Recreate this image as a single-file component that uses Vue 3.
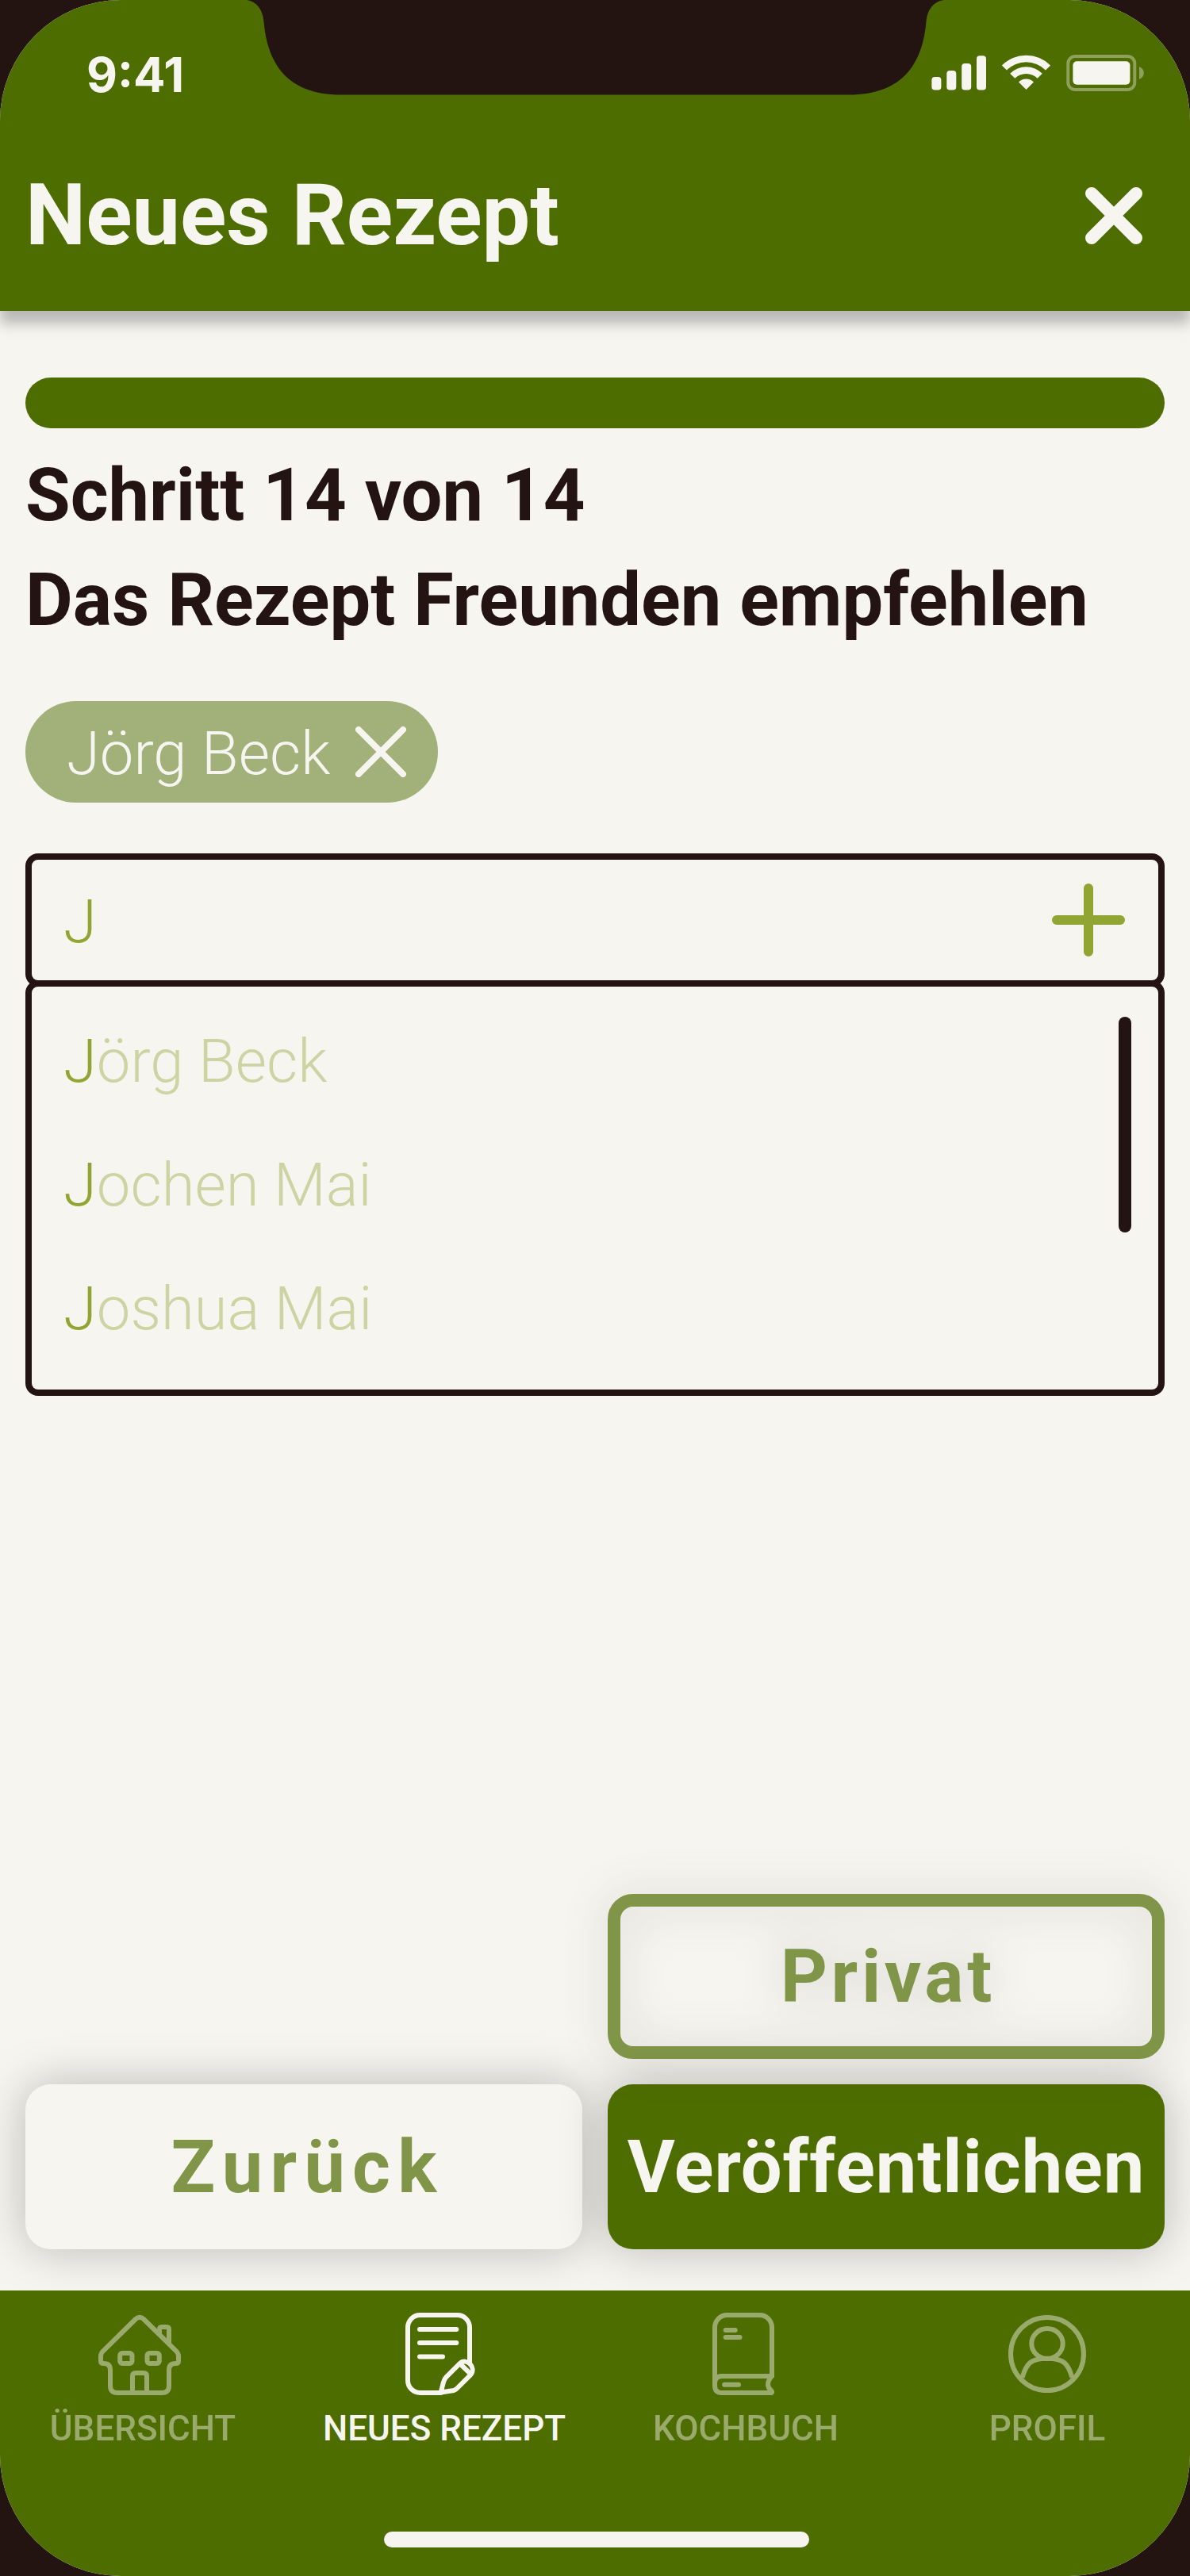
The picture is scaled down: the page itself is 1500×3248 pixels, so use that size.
<script setup>
const query = 'J'
const suggestions = ['Jörg Beck', 'Jochen Mai', 'Joshua Mai']
const tabs = [
  { id: 'home', label: 'ÜBERSICHT' },
  { id: 'new', label: 'NEUES REZEPT', active: true },
  { id: 'book', label: 'KOCHBUCH' },
  { id: 'profile', label: 'PROFIL' },
]
</script>

<template>
  <div class="device">
    <div class="screen">
      <header class="header">
        <div class="status">
          <span class="time">9:41</span>
          <svg class="status-icons" width="270" height="46" viewBox="0 0 270 46">
            <g fill="#f7f5f0">
              <rect x="0.4" y="28" width="12" height="16.5" rx="4" />
              <rect x="19.3" y="20" width="12" height="24.5" rx="4" />
              <rect x="38.2" y="11" width="12" height="33.5" rx="4" />
              <rect x="57" y="1.3" width="12" height="43.2" rx="4" />
              <path d="M88.9 13.4 A43.3 43.3 0 0 1 150.1 13.4 L144 19.5 A34.7 34.7 0 0 0 95 19.5 Z" />
              <path d="M99.2 23.7 A28.7 28.7 0 0 1 139.8 23.7 L133.7 29.8 A20 20 0 0 0 105.3 29.8 Z" />
              <path d="M110 34.5 A13.5 13.5 0 0 1 129 34.5 L119.5 44 Z" />
              <rect x="178.4" y="8.3" width="72" height="29.4" rx="5" />
            </g>
            <g opacity="0.38">
              <rect x="172.3" y="2" width="84" height="42" rx="9" fill="none" stroke="#f7f5f0" stroke-width="4" />
              <path d="M262 15 C265.500 16.500 267.800 19.500 267.800 23 C267.800 26.500 265.500 29.500 262 31 Z" fill="#f7f5f0" />
            </g>
          </svg>
        </div>
        <div class="title-row">
          <h1>Neues Rezept</h1>
          <svg class="close" width="72" height="72" viewBox="0 0 72 72">
            <path d="M8 8 L64 64 M64 8 L8 64" stroke="#f7f5f0" stroke-width="16" stroke-linecap="round" />
          </svg>
        </div>
      </header>

      <main class="main">
        <div class="progress"></div>
        <h2>Schritt 14 von 14<br />Das Rezept Freunden empfehlen</h2>

        <div class="chip">
          <span>Jörg Beck</span>
          <svg width="64" height="64" viewBox="0 0 64 64">
            <path d="M4 4 L60 60 M60 4 L4 60" stroke="#f7f5f0" stroke-width="8" stroke-linecap="round" />
          </svg>
        </div>

        <div class="field">
          <span>{{ query }}</span>
          <svg width="92" height="92" viewBox="0 0 92 92">
            <path d="M46 6 V86 M6 46 H86" stroke="#90a532" stroke-width="12" stroke-linecap="round" />
          </svg>
        </div>
        <div class="dropdown">
          <ul>
            <li v-for="name in suggestions" :key="name">{{ name.slice(0, 1) }}<span>{{ name.slice(1) }}</span></li>
          </ul>
          <div class="scrollbar"></div>
        </div>
      </main>

      <div class="actions">
        <button class="btn private">Privat</button>
        <button class="btn back"><span>Zurück</span></button>
        <button class="btn publish">Veröffentlichen</button>
      </div>

      <nav class="nav">
        <div class="tabs">
          <div v-for="tab in tabs" :key="tab.id" class="tab" :class="{ active: tab.active }">
            <svg width="120" height="112" viewBox="0 0 120 112" fill="none" stroke="#f7f5f0" stroke-width="6" stroke-linecap="round" stroke-linejoin="round">
              <template v-if="tab.id === 'home'">
                <path d="M51 14 Q56 10 61 14 L102 54.300 Q105 57.500 105 61 V66.700 Q105 70 101.500 70 Q93 70 93 78 V98 Q93 107 84 107 H28 Q19 107 19 98 V78 Q19 70 10.500 70 Q7 70 7 66.700 V61 Q7 57.500 10 54.300 Z" />
                <path d="M81 33 V27 Q81 24 84 24 H90 Q93 24 93 27 V45" stroke-linecap="butt" />
                <rect x="31.200" y="57" width="15.300" height="13" rx="3" />
                <rect x="65.500" y="57" width="15.300" height="13" rx="3" />
                <path d="M47 107 V86 Q47 82 51 82 H61 Q65 82 65 86 V107" />
              </template>
              <template v-else-if="tab.id === 'new'">
                <path d="M55.500 107 H29.500 A15.500 15.500 0 0 1 14 91.500 V24.500 A15.500 15.500 0 0 1 29.500 9 H76.500 A15.500 15.500 0 0 1 92 24.500 V68" />
                <path d="M29 27 H75.300 M29 44 H75.300 M29 61.500 H58" />
                <path d="M55.700 106.500 L59 93.500 Q60.200 89.500 62.500 87.200 L79.500 70.200 C88 62 101 75 93.200 84.300 L77.500 100 Q75.500 102.500 72 104 Z" />
                <path d="M80 70.500 L92.500 82.700" />
              </template>
              <template v-else-if="tab.id === 'book'">
                <path d="M21 97 V24.500 A15.500 15.500 0 0 1 36.500 9 H77.500 A15.500 15.500 0 0 1 93 24.500 V86 H30 Q21 86 21 95 V98 Q21 107 30 107 H92.500 Q94 106 92 104 Q88 101 88 96.500 Q88 91 93 86" />
                <path d="M34.700 28 H46.700 M34.700 37 H52.500 M33.200 96.700 H51" />
              </template>
              <template v-else>
                <circle cx="60" cy="58" r="46" />
                <ellipse cx="60" cy="45" rx="19.700" ry="18.900" />
                <path d="M28.500 88 C33.500 70.500 38.500 63.800 60 63.800 C81.500 63.800 86.500 70.500 91.500 88" stroke-linecap="butt" />
              </template>
            </svg>
            <span>{{ tab.label }}</span>
          </div>
        </div>
        <div class="home-indicator"></div>
      </nav>

      <svg class="notch" width="1500" height="120" viewBox="0 0 1500 120">
        <path d="M311 0 C324 2 331 12 332.500 27 C337 80 362 119.500 430 119.500 H1070 C1138 119.500 1163 80 1167.500 27 C1169 12 1176 2 1190 0 Z" fill="#231411" />
      </svg>
    </div>
  </div>
</template>

<style>
body {
  margin: 0;
  background: #231411;
}
</style>

<style scoped>
.device {
  width: 1500px;
  height: 3248px;
  background: #231411;
  font-family: Roboto, sans-serif;
}
.screen {
  position: relative;
  display: flex;
  flex-direction: column;
  height: 3248px;
  border-radius: 152px;
  overflow: hidden;
  background: #f7f5f0;
  color: #231411;
}
.notch {
  position: absolute;
  top: 0;
  left: 0;
}
.header {
  box-sizing: border-box;
  height: 392px;
  background: #4e6d00;
  color: #f7f5f0;
  box-shadow: 0 16px 16px rgba(0, 0, 0, 0.25);
}
.status {
  box-sizing: border-box;
  height: 160px;
  padding: 58px 56px 0 109px;
  display: flex;
  justify-content: space-between;
  align-items: flex-start;
}
.time {
  font: 700 60px/72px Inter, sans-serif;
}
.status-icons {
  margin-top: 11px;
}
.title-row {
  display: flex;
  align-items: center;
  justify-content: space-between;
  height: 222px;
  padding: 0 60px 0 32px;
}
.close {
  margin-top: 2px;
}
h1 {
  margin: 0;
  font-size: 108px;
  line-height: 128px;
  font-weight: 700;
}
.main {
  flex: 1;
  padding: 84px 32px 0;
}
.progress {
  height: 64px;
  border-radius: 32px;
  background: #4e6d00;
}
h2 {
  margin: 19px 0 61px;
  font-size: 92px;
  line-height: 132px;
  font-weight: 700;
}
.chip {
  box-sizing: border-box;
  display: flex;
  align-items: center;
  justify-content: space-between;
  width: 520px;
  height: 128px;
  padding: 0 40px 0 52px;
  border-radius: 64px;
  background: #a2b17a;
  color: #f7f5f0;
  font-size: 76px;
  line-height: 90px;
  font-weight: 300;
}
.chip span {
  padding-top: 4px;
}
.field {
  box-sizing: border-box;
  display: flex;
  align-items: center;
  justify-content: space-between;
  height: 168px;
  margin-top: 64px;
  padding: 0 42px 0 40px;
  border: 8px solid #231411;
  border-radius: 16px;
  color: #90a532;
  font-size: 76px;
  line-height: 90px;
  font-weight: 300;
}
.field span {
  padding-top: 4px;
}
.dropdown {
  box-sizing: border-box;
  display: flex;
  justify-content: space-between;
  height: 524px;
  margin-top: -8px;
  padding: 16px 34px 0 40px;
  border: 8px solid #231411;
  border-radius: 16px;
}
ul {
  list-style: none;
  margin: 0;
  padding: 0;
}
li {
  font-size: 76px;
  line-height: 156px;
  font-weight: 300;
  color: #90a532;
}
li span {
  opacity: 0.4;
}
.scrollbar {
  width: 16px;
  height: 272px;
  margin-top: 22px;
  border-radius: 8px;
  background: #231411;
}
.actions {
  display: grid;
  grid-template-columns: 702px 702px;
  gap: 32px;
  padding: 0 32px 52px;
}
.btn {
  box-sizing: border-box;
  height: 208px;
  padding: 2px 0 0;
  border: 0;
  border-radius: 32px;
  font: 700 92px/108px Roboto, sans-serif;
  text-align: center;
  white-space: nowrap;
}
.private {
  grid-column: 2;
  padding-left: 0.05em;
  border: 16px solid #4e6d00;
  background: transparent;
  color: #4e6d00;
  letter-spacing: 0.05em;
  opacity: 0.7;
  filter: drop-shadow(0 0 30px rgba(0, 0, 0, 0.25));
}
.back {
  padding-left: 0.1em;
  background: #f7f5f0;
  color: #4e6d00;
  letter-spacing: 0.1em;
  box-shadow: 0 0 60px rgba(0, 0, 0, 0.25);
}
.back span {
  opacity: 0.7;
}
.publish {
  background: #4e6d00;
  color: #f7f5f0;
  letter-spacing: 0.01em;
  box-shadow: 0 0 60px rgba(0, 0, 0, 0.25);
}
.nav {
  position: relative;
  box-sizing: border-box;
  height: 360px;
  padding-top: 22px;
  background: #4e6d00;
}
.tabs {
  display: grid;
  grid-template-columns: repeat(4, 380px);
  margin-left: -10px;
}
.tab {
  display: flex;
  flex-direction: column;
  align-items: center;
  gap: 14px;
  color: #f7f5f0;
  font-size: 44px;
  line-height: 52px;
  font-weight: 500;
  opacity: 0.45;
}
.tab.active {
  opacity: 1;
}
.home-indicator {
  width: 536px;
  height: 20px;
  margin: 104px auto 0;
  border-radius: 10px;
  background: #f7f5f0;
  transform: translateX(2px);
}
</style>
